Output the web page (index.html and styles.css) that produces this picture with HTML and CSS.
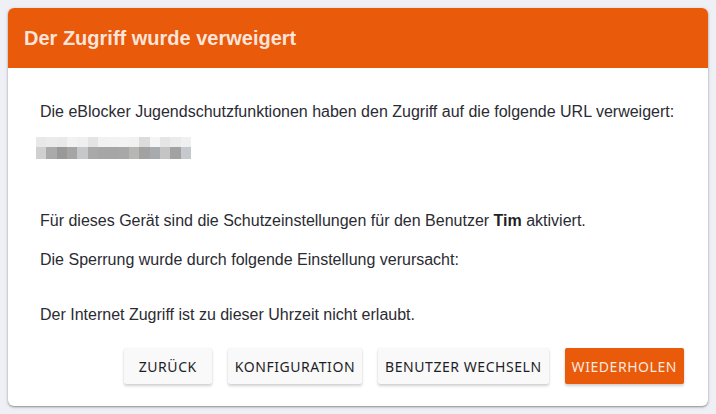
FILE: index.html
```html
<!DOCTYPE html>
<html lang="de">
<head>
<meta charset="utf-8">
<title>Der Zugriff wurde verweigert</title>
<link rel="stylesheet" href="styles.css">
</head>
<body>
<div class="card">
  <div class="card-header">Der Zugriff wurde verweigert</div>
  <div class="card-body">
    <p class="text first">Die eBlocker Jugendschutzfunktionen haben den Zugriff auf die folgende URL verweigert:</p>
    <div class="blur" aria-hidden="true">
      <span class="c1"></span><span class="c2"></span><span class="c3"></span><span class="c4"></span><span class="c5"></span><span class="c6"></span><span class="c7"></span><span class="c8"></span><span class="c9"></span><span class="c10"></span><span class="c11"></span><span class="c12"></span><span class="c13"></span><span class="c14"></span><span class="c15"></span>
      <span class="d1"></span><span class="d2"></span><span class="d3"></span><span class="d4"></span><span class="d5"></span><span class="d6"></span><span class="d7"></span><span class="d8"></span><span class="d9"></span><span class="d10"></span><span class="d11"></span><span class="d12"></span><span class="d13"></span><span class="d14"></span><span class="d15"></span>
    </div>
    <p class="text second">Für dieses Gerät sind die Schutzeinstellungen für den Benutzer <b>Tim</b> aktiviert.</p>
    <p class="text third">Die Sperrung wurde durch folgende Einstellung verursacht:</p>
    <p class="text fourth">Der Internet Zugriff ist zu dieser Uhrzeit nicht erlaubt.</p>
    <div class="actions">
      <button class="btn">ZURÜCK</button>
      <button class="btn">KONFIGURATION</button>
      <button class="btn">BENUTZER WECHSELN</button>
      <button class="btn primary">WIEDERHOLEN</button>
    </div>
  </div>
</div>
</body>
</html>
```
FILE: styles.css
```css
html, body {
  margin: 0;
  padding: 0;
}
body {
  background: #eff0f5;
  font-family: "Liberation Sans", Arial, sans-serif;
  padding: 8px;
  height: 414px;
  box-sizing: border-box;
}
.card {
  width: 700px;
  height: 398px;
  background: #ffffff;
  border-radius: 6px;
  box-shadow: 0 1px 2px rgba(0,0,0,0.35), 0 1px 4px rgba(0,0,0,0.12);
  overflow: hidden;
  display: flex;
  flex-direction: column;
}
.card-header {
  height: 60px;
  background: #ea5a0b;
  color: rgba(255,255,255,0.86);
  font-size: 20px;
  font-weight: bold;
  line-height: 60px;
  padding-left: 16px;
  flex: none;
}
.card-body {
  padding: 34px 24px 0 32px;
  display: flex;
  flex-direction: column;
}
.text {
  margin: 0;
  font-size: 16px;
  line-height: 20px;
  color: #2b2b33;
}
.text b { color: #1f1f24; }
.blur {
  margin-top: 15px;
  margin-left: -4px;
  width: 155px;
  height: 22px;
  display: grid;
  grid-template-columns: repeat(15, 1fr);
  grid-template-rows: 10px 12px;
}
.second { margin-top: 52px; }
.third { margin-top: 19px; }
.fourth { margin-top: 35px; }
.actions {
  margin-top: 23px;
  display: flex;
  justify-content: flex-end;
  gap: 16px;
}
.btn {
  height: 36px;
  min-width: 88px;
  padding: 0 7px;
  border: none;
  border-radius: 2px;
  background: #f9f9f9;
  color: #1e1e28;
  font-family: "Noto Sans", "Open Sans", sans-serif;
  font-size: 14px;
  letter-spacing: 0.55px;
  box-shadow: 0 2px 3px rgba(0,0,0,0.18), 0 0 1px rgba(0,0,0,0.12);
  cursor: pointer;
}
.btn.primary {
  background: #ea5a0b;
  color: rgba(255,255,255,0.88);
}
.c1{background:#e8e8e8}.c2{background:#ebebeb}.c3{background:#e9e9ea}.c4{background:#f2f2f2}.c5{background:#efefef}
.c6{background:#e2e4e6}.c7{background:#f1f1f1}.c8{background:#f2f2f2}.c9{background:#f3f3f3}.c10{background:#f1f1f1}
.c11{background:#dcdcdc}.c12{background:#f4f4f4}.c13{background:#e5e5e5}.c14{background:#eaebeb}.c15{background:#f0f0f0}
.d1{background:#d0d0d0}.d2{background:#aaaaaa}.d3{background:#999999}.d4{background:#a5a5a5}.d5{background:#c5c8cb}
.d6{background:#a9a9a9}.d7{background:#a6a6a6}.d8{background:#a6a6a6}.d9{background:#a8a8a8}.d10{background:#b6b6b5}
.d11{background:#a2a2a2}.d12{background:#a7abae}.d13{background:#c4c4c4}.d14{background:#a2a2a2}.d15{background:#c5c9cd}
```
